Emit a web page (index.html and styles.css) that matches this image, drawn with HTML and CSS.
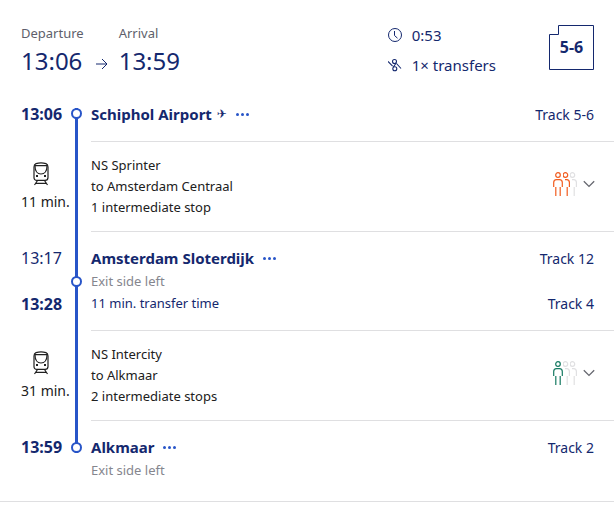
FILE: index.html
```html
<!DOCTYPE html>
<html lang="en">
<head>
<meta charset="utf-8">
<meta name="viewport" content="width=device-width, initial-scale=1">
<title>Schiphol Airport to Alkmaar</title>
<link rel="stylesheet" href="styles.css">
</head>
<body>
<svg class="defs" aria-hidden="true">
  <symbol id="train" viewBox="0 0 16 24">
    <g fill="none" stroke="currentColor" stroke-width="1.2">
      <path d="M3 1.6Q8 0 13 1.6Q15 2.3 15 5V15.5Q15 18.4 12 18.4H4Q1 18.4 1 15.5V5Q1 2.3 3 1.6Z"/>
      <path d="M1.500 3.600H14.500M2 4C2 9 4.500 12 8 12S14 9 14 4"/>
      <path d="M4.500 18.500 1.500 23M11.500 18.500 14.500 23M3 21.400H13"/>
    </g>
    <path fill="currentColor" d="M3 13h2v2H3zM11 13h2v2h-2z"/>
  </symbol>
  <symbol id="person" viewBox="0 0 10 24">
    <g fill="none" stroke="currentColor" stroke-width="1.200">
      <circle cx="5" cy="3" r="2.300"/>
      <path d="M.7 15V10.500Q.7 7.600 3.500 7.600H6.500Q9.300 7.600 9.300 10.500V15M2.800 15V24M7.200 15V24"/>
    </g>
  </symbol>
  <symbol id="person-behind" viewBox="0 0 7 24">
    <g fill="none" stroke="currentColor" stroke-width="1.200">
      <circle cx="2.400" cy="3" r="2.300"/>
      <path d="M2 7.600H3.600Q6.400 7.600 6.400 10.500V15M4.200 15V24"/>
    </g>
  </symbol>
  <symbol id="chevron" viewBox="0 0 12 8">
    <path d="M.8 1.200 6 6.400 11.200 1.200" fill="none" stroke="currentColor" stroke-width="1.300"/>
  </symbol>
  <symbol id="dots" viewBox="0 0 13 3">
    <g fill="currentColor"><circle cx="1.500" cy="1.500" r="1.500"/><circle cx="6.500" cy="1.500" r="1.500"/><circle cx="11.500" cy="1.500" r="1.500"/></g>
  </symbol>
</svg>

<main class="trip">
  <header class="summary">
    <div class="moment">
      <span class="caption">Departure</span>
      <time class="clock">13:06</time>
    </div>
    <svg class="arrow" viewBox="0 0 12 12" aria-hidden="true"><path d="M0 6H11M6 1 11 6 6 11" fill="none" stroke="currentColor"/></svg>
    <div class="moment">
      <span class="caption">Arrival</span>
      <time class="clock">13:59</time>
    </div>
    <div class="facts">
      <div class="fact">
        <svg viewBox="0 0 14 14" aria-hidden="true"><g fill="none" stroke="currentColor"><circle cx="7" cy="7" r="6.500"/><path d="M6.500 3V7.500L9.500 10.200"/></g></svg>
        <span>0:53</span>
      </div>
      <div class="fact">
        <svg viewBox="0 0 14 14" aria-hidden="true"><g fill="none" stroke="currentColor" stroke-width="1.100"><path d="M0 3.500 4.600 8.100M8.500 5.500 13 10.500M5.200 9.300 8 5.200"/><circle cx="6.500" cy="3.500" r="2"/><circle cx="6.800" cy="10.700" r="2"/></g></svg>
        <span>1× transfers</span>
      </div>
    </div>
    <div class="platform">
      <svg viewBox="0 0 45 45" aria-hidden="true"><path d="M9.500.5H44.500V44.500H.5V9.500H9.500Z" fill="none" stroke="currentColor"/></svg>
      <span>5-6</span>
    </div>
  </header>

  <ol class="route">
    <li class="row stop first">
      <time class="time strong">13:06</time>
      <div class="rail"><span class="node"></span></div>
      <div class="body">
        <div class="line title"><h2>Schiphol Airport</h2><span class="plane">✈</span><button class="more" aria-label="More about Schiphol Airport"><svg><use href="#dots"/></svg></button><span class="track">Track 5-6</span></div>
      </div>
    </li>
    <li class="row leg">
      <div class="vehicle"><svg><use href="#train"/></svg><span>11 min.</span></div>
      <div class="rail"></div>
      <div class="body">
        <div class="service"><p>NS Sprinter</p><p>to Amsterdam Centraal</p><p>1 intermediate stop</p></div>
        <div class="status">
          <div class="crowd medium"><svg class="front"><use href="#person"/></svg><svg class="behind filled"><use href="#person-behind"/></svg><svg class="behind"><use href="#person-behind"/></svg></div>
          <button class="expand" aria-label="Show intermediate stop"><svg><use href="#chevron"/></svg></button>
        </div>
      </div>
    </li>
    <li class="row stop">
      <div class="times"><time class="time">13:17</time><time class="time strong">13:28</time></div>
      <div class="rail"><span class="node"></span></div>
      <div class="body">
        <div class="line title"><h2>Amsterdam Sloterdijk</h2><button class="more" aria-label="More about Amsterdam Sloterdijk"><svg><use href="#dots"/></svg></button><span class="track">Track 12</span></div>
        <p class="exit">Exit side left</p>
        <div class="line"><span class="transfer">11 min. transfer time</span><span class="track">Track 4</span></div>
      </div>
    </li>
    <li class="row leg">
      <div class="vehicle"><svg><use href="#train"/></svg><span>31 min.</span></div>
      <div class="rail"></div>
      <div class="body">
        <div class="service"><p>NS Intercity</p><p>to Alkmaar</p><p>2 intermediate stops</p></div>
        <div class="status">
          <div class="crowd low"><svg class="front"><use href="#person"/></svg><svg class="behind"><use href="#person-behind"/></svg><svg class="behind"><use href="#person-behind"/></svg></div>
          <button class="expand" aria-label="Show intermediate stops"><svg><use href="#chevron"/></svg></button>
        </div>
      </div>
    </li>
    <li class="row stop last">
      <time class="time strong">13:59</time>
      <div class="rail"><span class="node"></span></div>
      <div class="body">
        <div class="line title"><h2>Alkmaar</h2><button class="more" aria-label="More about Alkmaar"><svg><use href="#dots"/></svg></button><span class="track">Track 2</span></div>
        <p class="exit">Exit side left</p>
      </div>
    </li>
  </ol>
</main>
</body>
</html>
```

FILE: styles.css
```css
:root {
  --navy: #14286e;
  --blue: #2855c8;
  --line: #dfdfe1;
}

* { box-sizing: border-box; }

body {
  margin: 0;
  background: #fff;
  color: #202020;
  font: 14px/21px "Noto Sans", "Open Sans", sans-serif;
}

h2, p, ol { margin: 0; padding: 0; }
ol { list-style: none; }
svg { display: block; }
.defs { position: absolute; width: 0; height: 0; }

button {
  padding: 0;
  border: 0;
  background: none;
  cursor: pointer;
}

.trip { border-bottom: 1px solid var(--line); }

.caption, .service, .exit, .transfer { font-size: 13px; }

/* Summary */
.summary {
  display: flex;
  align-items: flex-start;
  padding: 20px 20px 0 21px;
  color: var(--navy);
}

.moment { display: flex; flex-direction: column; padding-top: 3px; }
.caption { line-height: 20px; color: #5e5f6b; }
.clock { font-size: 24px; line-height: 36px; }
.arrow { width: 12px; height: 12px; margin: 38px 11px 0 12px; }

.facts {
  display: flex;
  flex-direction: column;
  margin: 0 53px 0 auto;
  font-size: 15px;
  line-height: 30px;
}

.fact { display: flex; align-items: center; gap: 10px; }
.fact svg { width: 14px; height: 14px; }

.platform {
  display: grid;
  width: 45px;
  height: 45px;
  margin-top: 5px;
  place-items: center;
  font-size: 16px;
  font-weight: 700;
}

.platform > * { grid-area: 1 / 1; }
.platform svg { width: 45px; height: 45px; }

/* Route */
.route { margin-top: 23px; }

.row {
  display: grid;
  grid-template-columns: 50px 11px 1fr;
  padding-left: 21px;
}

.rail {
  display: flex;
  align-items: center;
  justify-content: center;
  background: linear-gradient(var(--blue), var(--blue)) center / 3px 100% no-repeat;
}

.node {
  flex: none;
  width: 11px;
  height: 11px;
  border: 2px solid var(--blue);
  border-radius: 50%;
  background: #fff;
}

.body {
  margin-left: 9px;
  padding: 15px 20px 16px 0;
  border-bottom: 1px solid var(--line);
}

.stop { color: var(--navy); }

.time { font-size: 16px; line-height: 22px; }
.strong { font-weight: 700; }
.row > .time { padding-top: 15px; }

.times {
  display: flex;
  flex-direction: column;
  justify-content: space-between;
  padding: 15px 0 16px;
}

.first .body, .first > .time { padding-top: 0; }
.first .rail { align-items: flex-start; margin-top: 5px; }

.last .body { padding-bottom: 19px; border-bottom: 0; }
.last .rail { align-items: flex-end; align-self: start; height: 32px; }

.line { display: flex; align-items: center; }
.title { min-height: 22px; }
.title h2 { font-size: 15px; line-height: 22px; }
.plane { margin-left: 5px; font: 12px/22px "DejaVu Sans", sans-serif; }
.more { margin-left: 9px; color: var(--blue); }
.more svg { width: 13px; height: 3px; }
.track { margin-left: auto; }
.exit { line-height: 24px; color: #85868e; }

/* Train legs */
.leg .body {
  display: flex;
  align-items: center;
  justify-content: space-between;
  padding: 13px 19px 13px 0;
}

.vehicle {
  display: flex;
  flex-direction: column;
  gap: 5px;
  padding-top: 20px;
  white-space: nowrap;
}

.vehicle svg { width: 16px; height: 24px; margin-left: 12px; }

.status { display: flex; align-items: center; gap: 6px; padding-bottom: 6px; }
.crowd { display: flex; }
.crowd svg { height: 24px; }
.front { width: 10px; }
.behind { width: 7px; color: #e0e0e2; }
.medium .front, .medium .filled { color: #f25c1f; }
.low .front { color: #167a62; }

.expand { color: #66676f; }
.expand svg { width: 12px; height: 8px; }
```
